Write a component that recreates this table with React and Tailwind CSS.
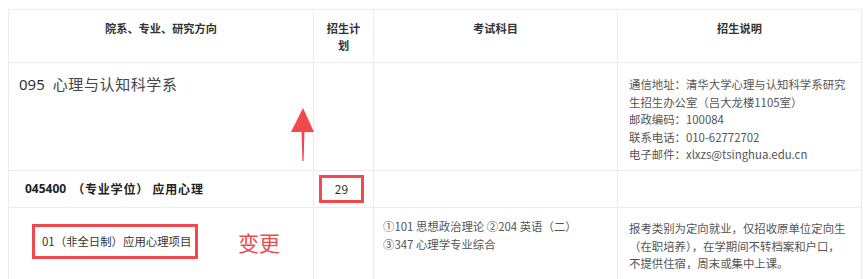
import React from 'react';

const sans = '"Noto Sans", "Noto Sans CJK SC", sans-serif';
const cjk = '"Noto Sans CJK SC", "Noto Sans", sans-serif';

const cell = 'border-r border-b border-[#ececec]';
const head = `${cell} pt-[10px] text-center font-bold text-[11.2px] leading-[17px] text-[#333]`;

const UpArrow = () => (
  <svg width="24" height="54" viewBox="0 0 24 54" className="absolute left-[291px] top-[108px]">
    <polygon points="12,0 23,24 0,24" fill="#f2474b" />
    <polygon points="10.5,22 13.5,22 12.6,53 11.4,53" fill="#f2474b" />
  </svg>
);

export default function App() {
  return (
    <div className="relative w-[867px] h-[279px] overflow-hidden bg-white" style={{ fontFamily: cjk }}>
      <div className="ml-[8px] mt-[9px] w-[853px] grid grid-cols-[305px_60px_244px_244px] border-l border-t border-[#ececec] text-[11.4px] text-[#555]">
        {/* header */}
        <div className={`${head} h-[53px]`}>院系、专业、研究方向</div>
        <div className={`${head} px-[12px]`}>招生计划</div>
        <div className={head}>考试科目</div>
        <div className={head}>招生说明</div>

        {/* department row */}
        <div className={`${cell} h-[108px] pl-[10px] pt-[10px] text-[15px] leading-[22px] text-[#333]`}>
          <span style={{ fontFamily: sans }}>095</span>
          <span className="ml-[8px] text-[#444] tracking-[0.6px]">心理与认知科学系</span>
        </div>
        <div className={cell}></div>
        <div className={cell}></div>
        <div className={`${cell} pl-[11px] pr-[12px] pt-[13px] leading-[17.5px]`}>
          <div>通信地址：清华大学心理与认知科学系研究生招生办公室（吕大龙楼1105室）</div>
          <div>邮政编码：100084</div>
          <div>联系电话：010-62772702</div>
          <div>电子邮件：xlxzs@tsinghua.edu.cn</div>
        </div>

        {/* major row */}
        <div className={`${cell} h-[37px] pl-[16px] flex items-center font-bold text-[12px] text-[#222]`}>
          <span style={{ fontFamily: sans }}>045400</span>
          <span className="ml-[6px] tracking-[0.8px]">（专业学位） 应用心理</span>
        </div>
        <div className={`${cell} flex items-center pl-[5px]`}>
          <div className="w-[45px] h-[28px] border-[3px] border-[#f04a4e] flex items-center justify-center text-[12px] text-[#333]">29</div>
        </div>
        <div className={cell}></div>
        <div className={cell}></div>

        {/* direction row */}
        <div className={`${cell} h-[80px] pl-[23px] pt-[16px] flex items-start`}>
          <div className="w-[166px] h-[35px] border-[3px] border-[#f04a4e] flex items-center pl-[7px] text-[11.4px] text-[#333] whitespace-nowrap">01（非全日制）应用心理项目</div>
          <div className="ml-[40px] text-[21px] leading-[36px] text-[#f04a4e]">变更</div>
        </div>
        <div className={cell}></div>
        <div className={`${cell} pl-[9px] pt-[10px] leading-[17.5px]`}>
          <div>①101 思想政治理论 ②204 英语（二）</div>
          <div>③347 心理学专业综合</div>
        </div>
        <div className={`${cell} pl-[11px] pr-[12px] pt-[12px] leading-[17.5px]`}>
          报考类别为定向就业，仅招收原单位定向生（在职培养），在学期间不转档案和户口，不提供住宿，周末或集中上课。
        </div>
      </div>
      <UpArrow />
    </div>
  );
}
